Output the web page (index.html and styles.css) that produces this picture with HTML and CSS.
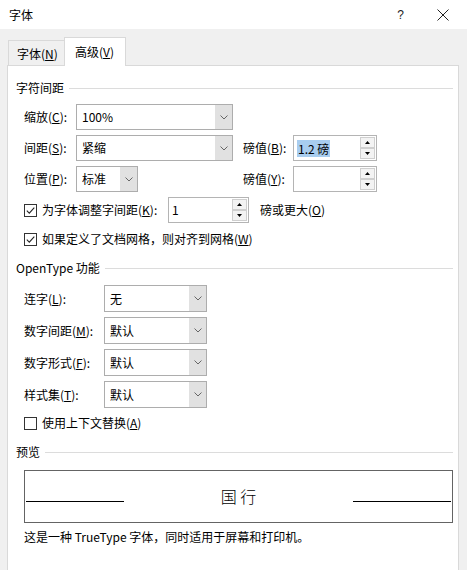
FILE: index.html
```html
<!DOCTYPE html>
<html lang="zh-CN">
<head>
<meta charset="utf-8">
<title>字体</title>
<link rel="stylesheet" href="styles.css">
</head>
<body>
<div class="titlebar">
  <span class="title">字体</span>
  <span class="help">?</span>
  <span class="close"><svg width="12" height="12" viewBox="0 0 12 12"><path d="M0.5 0.5 L11.5 11.5 M11.5 0.5 L0.5 11.5" stroke="#222" stroke-width="1" fill="none"/></svg></span>
</div>
<div class="tabs">
  <div class="tab">字体(<u>N</u>)</div>
  <div class="tab active">高级(<u>V</u>)</div>
</div>
<div class="panel">
  <div class="group-h"><span>字符间距</span><i></i></div>
  <div class="grid1">
    <span class="lbl">缩放(<u>C</u>):</span>
    <div class="combo"><span class="val">100%</span><span class="dd"><svg width="8" height="5" viewBox="0 0 8 5"><path d="M0.5 0.5 L4 4 L7.5 0.5" stroke="#666" fill="none"/></svg></span></div>
    <span></span><span></span><span></span>

    <span class="lbl">间距(<u>S</u>):</span>
    <div class="combo"><span class="val">紧缩</span><span class="dd"><svg width="8" height="5" viewBox="0 0 8 5"><path d="M0.5 0.5 L4 4 L7.5 0.5" stroke="#666" fill="none"/></svg></span></div>
    <span></span>
    <span class="lbl">磅值(<u>B</u>):</span>
    <div class="spin"><span class="val"><span class="sel">1.2 磅</span></span><span class="sbtns"><span class="sb"><svg width="5" height="3" viewBox="0 0 5 3"><path d="M0 3 L2.5 0 L5 3 Z" fill="#000"/></svg></span><span class="sb"><svg width="5" height="3" viewBox="0 0 5 3"><path d="M0 0 L2.5 3 L5 0 Z" fill="#000"/></svg></span></span></div>

    <span class="lbl">位置(<u>P</u>):</span>
    <div class="combo short"><span class="val">标准</span><span class="dd"><svg width="8" height="5" viewBox="0 0 8 5"><path d="M0.5 0.5 L4 4 L7.5 0.5" stroke="#666" fill="none"/></svg></span></div>
    <span></span>
    <span class="lbl">磅值(<u>Y</u>):</span>
    <div class="spin"><span class="val"></span><span class="sbtns"><span class="sb"><svg width="5" height="3" viewBox="0 0 5 3"><path d="M0 3 L2.5 0 L5 3 Z" fill="#000"/></svg></span><span class="sb"><svg width="5" height="3" viewBox="0 0 5 3"><path d="M0 0 L2.5 3 L5 0 Z" fill="#000"/></svg></span></span></div>
  </div>

  <div class="row kern">
    <span class="chklbl"><span class="chk"><svg width="13" height="13" viewBox="0 0 13 13"><rect x="0.5" y="0.5" width="12" height="12" fill="#fff" stroke="#333"/><path d="M2.8 6.6 L5.3 9.1 L10.3 3.6" stroke="#222" stroke-width="1.1" fill="none"/></svg></span>为字体调整字间距(<u>K</u>):</span>
    <div class="spin kspin"><span class="val">1</span><span class="sbtns"><span class="sb"><svg width="5" height="3" viewBox="0 0 5 3"><path d="M0 3 L2.5 0 L5 3 Z" fill="#000"/></svg></span><span class="sb"><svg width="5" height="3" viewBox="0 0 5 3"><path d="M0 0 L2.5 3 L5 0 Z" fill="#000"/></svg></span></span></div>
    <span class="after">磅或更大(<u>O</u>)</span>
  </div>
  <div class="row grid-snap">
    <span class="chk"><svg width="13" height="13" viewBox="0 0 13 13"><rect x="0.5" y="0.5" width="12" height="12" fill="#fff" stroke="#333"/><path d="M2.8 6.6 L5.3 9.1 L10.3 3.6" stroke="#222" stroke-width="1.1" fill="none"/></svg></span>如果定义了文档网格，则对齐到网格(<u>W</u>)
  </div>

  <div class="group-h g2"><span>OpenType 功能</span><i></i></div>
  <div class="grid2">
    <span class="lbl">连字(<u>L</u>):</span>
    <div class="combo"><span class="val">无</span><span class="dd"><svg width="8" height="5" viewBox="0 0 8 5"><path d="M0.5 0.5 L4 4 L7.5 0.5" stroke="#666" fill="none"/></svg></span></div>
    <span class="lbl">数字间距(<u>M</u>):</span>
    <div class="combo"><span class="val">默认</span><span class="dd"><svg width="8" height="5" viewBox="0 0 8 5"><path d="M0.5 0.5 L4 4 L7.5 0.5" stroke="#666" fill="none"/></svg></span></div>
    <span class="lbl">数字形式(<u>F</u>):</span>
    <div class="combo"><span class="val">默认</span><span class="dd"><svg width="8" height="5" viewBox="0 0 8 5"><path d="M0.5 0.5 L4 4 L7.5 0.5" stroke="#666" fill="none"/></svg></span></div>
    <span class="lbl">样式集(<u>T</u>):</span>
    <div class="combo"><span class="val">默认</span><span class="dd"><svg width="8" height="5" viewBox="0 0 8 5"><path d="M0.5 0.5 L4 4 L7.5 0.5" stroke="#666" fill="none"/></svg></span></div>
  </div>
  <div class="row ctx">
    <span class="chk"><svg width="13" height="13" viewBox="0 0 13 13"><rect x="0.5" y="0.5" width="12" height="12" fill="#fff" stroke="#333"/></svg></span>使用上下文替换(<u>A</u>)
  </div>

  <div class="group-h g3"><span>预览</span><i></i></div>
  <div class="preview">
    <span class="pline"></span>
    <span class="ptext">国 行</span>
    <span class="pline"></span>
  </div>
  <div class="desc">这是一种 TrueType 字体，同时适用于屏幕和打印机。</div>
</div>
</body>
</html>
```
FILE: styles.css
```css
html, body {
  margin: 0;
  padding: 0;
}
body {
  background: #f0f0f0;
  font-family: "Noto Sans CJK SC", "Microsoft YaHei", sans-serif;
  font-size: 12px;
  color: #000;
  width: 467px;
  height: 570px;
  overflow: hidden;
}
u {
  text-decoration: underline;
  text-underline-offset: 1px;
}
.titlebar {
  height: 29px;
  background: #fff;
  display: flex;
  align-items: center;
}
.title {
  margin-left: 9px;
  flex: 1;
  line-height: 16px;
}
.help {
  font-family: "Liberation Sans", sans-serif;
  font-size: 12px;
  margin-right: 33px;
  color: #222;
}
.close {
  display: flex;
  margin-right: 18px;
}
.tabs {
  height: 36px;
  display: flex;
  align-items: flex-end;
  padding-left: 8px;
}
.tab {
  box-sizing: border-box;
  height: 25px;
  width: 57px;
  border: 1px solid #d9d9d9;
  border-bottom: none;
  background: #f0f0f0;
  padding-left: 8px;
  line-height: 26px;
}
.tab.active {
  height: 29px;
  width: 62px;
  margin-left: -1px;
  margin-bottom: -1px;
  background: #fff;
  padding-left: 10px;
  line-height: 28px;
  position: relative;
  z-index: 1;
}
.panel {
  box-sizing: border-box;
  margin-left: 7px;
  width: 452px;
  height: 520px;
  background: #fff;
  border: 1px solid #d9d9d9;
  padding-top: 14px;
}
.group-h {
  display: flex;
  align-items: center;
  height: 16px;
  line-height: 16px;
  padding-left: 8px;
  margin-right: 5px;
}
.group-h i {
  flex: 1;
  height: 0;
  border-top: 1px solid #dcdcdc;
  margin-left: 5px;
}
.g2 { margin-top: 8px; }
.g3 { margin-top: 8px; }
.lbl {
  line-height: 16px;
}
.grid1 {
  margin-top: 8px;
  padding-left: 16px;
  display: grid;
  grid-template-columns: 52px 157px 10px 50px 84px;
  grid-auto-rows: 26px;
  row-gap: 5px;
  align-items: center;
}
.grid2 {
  margin-top: 9px;
  padding-left: 16px;
  display: grid;
  grid-template-columns: 80px 103px;
  grid-auto-rows: 27px;
  row-gap: 5px;
  align-items: center;
}
.combo {
  box-sizing: border-box;
  height: 100%;
  display: flex;
  border: 1px solid #adadad;
  background: #fff;
}
.combo.short {
  width: 62px;
}
.val {
  flex: 1;
  display: flex;
  align-items: center;
  padding-left: 5px;
  line-height: 16px;
  white-space: nowrap;
}
.dd {
  width: 16px;
  background: #e1e1e1;
  border-left: 1px solid #e1e1e1;
  display: flex;
  align-items: center;
  justify-content: center;
}
.spin {
  box-sizing: border-box;
  height: 100%;
  display: flex;
  border: 1px solid #b4b4b4;
  background: #fff;
}
.spin .val {
  padding-left: 3px;
}
.sel {
  background: #a8cdef;
  padding: 0 1px;
  line-height: 17px;
}
.sbtns {
  width: 15px;
  display: flex;
  flex-direction: column;
  padding: 1px 1px 1px 0;
  gap: 0;
}
.sb {
  flex: 1;
  box-sizing: border-box;
  border: 1px solid #cfcfcf;
  background: #f3f3f3;
  display: flex;
  align-items: center;
  justify-content: center;
}
.row {
  display: flex;
  align-items: center;
  height: 26px;
  padding-left: 16px;
  line-height: 16px;
  white-space: nowrap;
}
.kern { margin-top: 5px; }
.grid-snap { margin-top: 3px; }
.ctx { margin-top: 2px; }
.chk {
  display: flex;
  width: 13px;
  height: 13px;
  margin-right: 5px;
  flex: none;
}
.chklbl {
  display: flex;
  align-items: center;
  width: 144px;
  flex: none;
}
.kspin {
  width: 81px;
  height: 26px;
  flex: none;
}
.after {
  margin-left: 11px;
}
.preview {
  box-sizing: border-box;
  margin: 10px 5px 0 16px;
  height: 53px;
  border: 1px solid #646464;
  display: flex;
  justify-content: space-between;
  padding: 0 1px;
}
.pline {
  width: 98px;
  height: 0;
  border-top: 1px solid #000;
  margin-top: 30px;
}
.ptext {
  margin-top: 15px;
  font-size: 16px;
  line-height: 20px;
  font-weight: 300;
}
.desc {
  margin-top: 6px;
  padding-left: 16px;
  line-height: 16px;
}
```
